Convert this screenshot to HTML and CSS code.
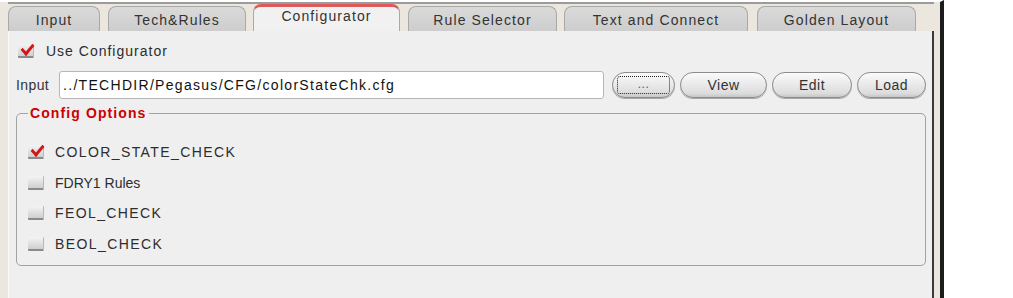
FILE: index.html
```html
<!DOCTYPE html>
<html lang="en">
<head>
    <meta charset="UTF-8">
    <title>Configurator</title>
    <link rel="stylesheet" href="styles.css">
</head>
<body>
<div class="frame">
    <div class="tabs">
        <div class="tab tab-input">Input</div>
        <div class="tab tab-tech">Tech&amp;Rules</div>
        <div class="tab tab-conf active">Configurator</div>
        <div class="tab tab-rule">Rule Selector</div>
        <div class="tab tab-text">Text and Connect</div>
        <div class="tab tab-golden">Golden Layout</div>
    </div>

    <div class="panel">
        <label class="use-row">
            <span class="check on"></span>
            <span class="use-label">Use Configurator</span>
        </label>

        <div class="input-row">
            <span class="input-label">Input</span>
            <div class="path-field">../TECHDIR/Pegasus/CFG/colorStateChk.cfg</div>
            <button class="btn btn-browse"><span class="focus">...</span></button>
            <button class="btn btn-view">View</button>
            <button class="btn btn-edit">Edit</button>
            <button class="btn btn-load">Load</button>
        </div>

        <fieldset class="options">
            <legend>Config Options</legend>
            <label class="opt"><span class="check on"></span><span class="opt-label caps">COLOR_STATE_CHECK</span></label>
            <label class="opt"><span class="check"></span><span class="opt-label">FDRY1 Rules</span></label>
            <label class="opt"><span class="check"></span><span class="opt-label caps">FEOL_CHECK</span></label>
            <label class="opt"><span class="check"></span><span class="opt-label caps">BEOL_CHECK</span></label>
        </fieldset>
    </div>
</div>
</body>
</html>
```

FILE: styles.css
```css
html, body {
    margin: 0;
    padding: 0;
    background-color: #ffffff;
    font-family: "Liberation Sans", Arial, sans-serif;
    color: #2a2a2a;
    overflow: hidden;
}

.frame {
    width: 944px;
    height: 298px;
    box-sizing: border-box;
    background-color: #ebe7df; /* бежевая рамка окна */
    border-right: 4px solid #1c1c1c;
    border-top: 2px solid #ffffff;
    padding-right: 6px;
    display: flex;
    flex-direction: column;
}

.tabs {
    height: 29px;
    display: flex;
    align-items: flex-end;
    margin-left: 8px;
    border-top: 2px solid #9c9c9c;
    box-sizing: border-box;
}

.tab {
    height: 25px;
    box-sizing: border-box;
    background: linear-gradient(#dadada, #cdcdcd);
    border: 1px solid #a9a9a9;
    border-bottom: none;
    border-radius: 8px 8px 0 0;
    font-size: 14px;
    letter-spacing: 1.1px;
    color: #333;
    display: flex;
    justify-content: center;
    align-items: center;
    padding-top: 2px;
}

.tab-input  { width: 92px; }
.tab-tech   { width: 138px; margin-left: 8px; }
.tab-conf   { width: 147px; margin-left: 7px; }
.tab-rule   { width: 149px; margin-left: 8px; }
.tab-text   { width: 184px; margin-left: 7px; }
.tab-golden { width: 159px; margin-left: 9px; }

.tab.active {
    height: 27px;
    background: #f1f1f1;
    border-top: 3px solid #de5a5a;
    align-items: flex-start;
    padding-top: 1px;
}

.panel {
    flex: 1;
    margin-left: 8px;
    background-color: #efefef;
    border-left: 1px solid #fafafa;
    border-right: 2px solid #3a3a3a;
    box-sizing: border-box;
    padding: 11px 6px 0 7px;
    display: flex;
    flex-direction: column;
}

.use-row {
    display: flex;
    align-items: center;
    height: 18px;
    padding-left: 2px;
}

.use-label {
    margin-left: 12px;
    font-size: 14px;
    letter-spacing: 1px;
    color: #2d2d2d;
}

.check {
    width: 16px;
    height: 14px;
    box-sizing: border-box;
    background: linear-gradient(#f4f4f4, #cfcfcf);
    border-bottom: 2px solid #8a8a8a;
    border-right: 1px solid #b8b8b8;
    border-radius: 1px;
    position: relative;
    flex: none;
}

.check.on::after {
    content: "";
    position: absolute;
    left: 3px;
    top: 0;
    width: 10px;
    height: 5px;
    border-left: 3px solid #d01818;
    border-bottom: 3px solid #d01818;
    transform: rotate(-50deg) skewX(-8deg);
    transform-origin: center;
}

.input-row {
    display: flex;
    align-items: center;
    margin-top: 10px;
    height: 29px;
}

.input-label {
    font-size: 14px;
    letter-spacing: 0.4px;
    width: 43px;
    color: #333;
}

.path-field {
    width: 545px;
    height: 28px;
    box-sizing: border-box;
    background-color: #ffffff;
    border: 1px solid #b6b6b6;
    border-radius: 3px;
    padding: 5px 3px 0;
    font-size: 14px;
    color: #111;
    letter-spacing: 1.3px;
}

.btn {
    height: 26px;
    box-sizing: border-box;
    border: 1px solid #8c8c8c;
    border-radius: 13px;
    background: linear-gradient(#fbfbfb, #dcdcdc 85%, #c6c6c6);
    font-family: inherit;
    font-size: 14px;
    letter-spacing: 0.5px;
    color: #333;
    padding: 0;
    margin-left: 5px;
    box-shadow: 0 1px 0 #a8a8a8;
}

.btn-browse { width: 63px; margin-left: 8px; padding: 3px 4px; }
.btn-view   { width: 87px; }
.btn-edit   { width: 80px; }
.btn-load   { width: 69px; }

.btn-browse .focus {
    display: block;
    height: 100%;
    border: 1px dotted #222;
    border-radius: 3px;
    line-height: 14px;
    font-size: 12px;
    color: #555;
    box-sizing: border-box;
}

.options {
    margin: 6px 0 0 0;
    width: 910px;
    height: 161px;
    box-sizing: border-box;
    border: 1px solid #a2a2a2;
    border-radius: 5px;
    padding: 16px 0 0 11px;
    display: flex;
    flex-direction: column;
}

.options legend {
    color: #cc0000;
    font-weight: bold;
    font-size: 14px;
    letter-spacing: 1.1px;
    padding: 0 2px;
    margin-left: 0;
}

.opt {
    display: flex;
    align-items: center;
    height: 30.5px;
}

.opt-label {
    margin-left: 11px;
    font-size: 14px;
    color: #2d2d2d;
}

.opt-label.caps {
    letter-spacing: 1.4px;
}
```
